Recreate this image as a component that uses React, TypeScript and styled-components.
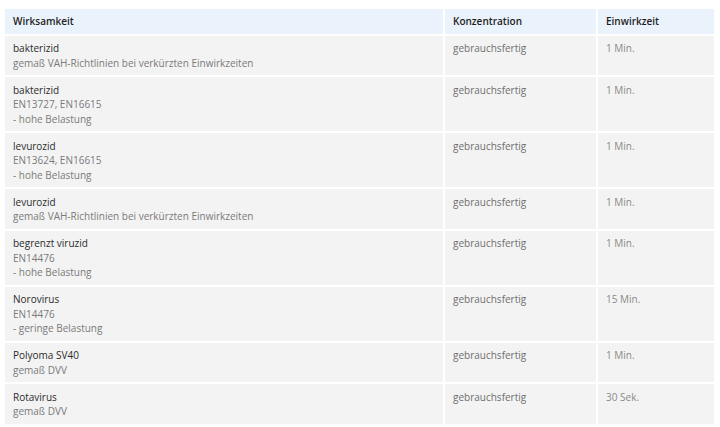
import React from "react";
import styled, { createGlobalStyle } from "styled-components";

const GlobalStyle = createGlobalStyle`
  html, body {
    margin: 0;
    padding: 0;
    background: #ffffff;
  }
  body {
    font-family: "Open Sans", "Liberation Sans", sans-serif;
  }
`;

type Row = {
  title: string;
  notes: string[];
  concentration: string;
  time: string;
};

const rows: Row[] = [
  { title: "bakterizid", notes: ["gemaß VAH-Richtlinien bei verkürzten Einwirkzeiten"], concentration: "gebrauchsfertig", time: "1 Min." },
  { title: "bakterizid", notes: ["EN13727, EN16615", "- hohe Belastung"], concentration: "gebrauchsfertig", time: "1 Min." },
  { title: "levurozid", notes: ["EN13624, EN16615", "- hohe Belastung"], concentration: "gebrauchsfertig", time: "1 Min." },
  { title: "levurozid", notes: ["gemaß VAH-Richtlinien bei verkürzten Einwirkzeiten"], concentration: "gebrauchsfertig", time: "1 Min." },
  { title: "begrenzt viruzid", notes: ["EN14476", "- hohe Belastung"], concentration: "gebrauchsfertig", time: "1 Min." },
  { title: "Norovirus", notes: ["EN14476", "- geringe Belastung"], concentration: "gebrauchsfertig", time: "15 Min." },
  { title: "Polyoma SV40", notes: ["gemaß DVV"], concentration: "gebrauchsfertig", time: "1 Min." },
  { title: "Rotavirus", notes: ["gemaß DVV"], concentration: "gebrauchsfertig", time: "30 Sek." },
];

function App() {
  return (
    <Page>
      <GlobalStyle />
      <Table>
        <colgroup>
          <col style={{ width: 438 }} />
          <col style={{ width: 151 }} />
          <col style={{ width: 116 }} />
        </colgroup>
        <thead>
          <tr>
            <Th>Wirksamkeit</Th>
            <Th>Konzentration</Th>
            <Th>Einwirkzeit</Th>
          </tr>
        </thead>
        <tbody>
          {rows.map((row, i) => (
            <tr key={i}>
              <Td>
                <Title>{row.title}</Title>
                {row.notes.map((n, j) => (
                  <Note key={j}>{n}</Note>
                ))}
              </Td>
              <Td $muted>{row.concentration}</Td>
              <Td $muted $light>{row.time}</Td>
            </tr>
          ))}
        </tbody>
      </Table>
    </Page>
  );
}

export default App;

const Page = styled.div`
  width: 720px;
  height: 427px;
  padding: 7px 0 0 3px;
  box-sizing: border-box;
  overflow: hidden;
`;

const Table = styled.table`
  border-collapse: separate;
  border-spacing: 2px;
  table-layout: fixed;
  width: 713px;
  font-size: 10px;
  line-height: 14.5px;
`;

const Th = styled.th`
  background: #eaf2fb;
  color: #1e1e1e;
  font-weight: 600;
  text-align: left;
  padding: 5px 8px 5px;
`;

const Td = styled.td<{ $muted?: boolean; $light?: boolean }>`
  background: #f3f3f3;
  vertical-align: top;
  padding: 5.5px 8px 5px;
  color: ${(p) => (p.$light ? "#8a8a8a" : p.$muted ? "#6e6e6e" : "#333")};
`;

const Title = styled.div`
  color: #2b2b2b;
`;

const Note = styled.div`
  color: #7a7a7a;
`;
